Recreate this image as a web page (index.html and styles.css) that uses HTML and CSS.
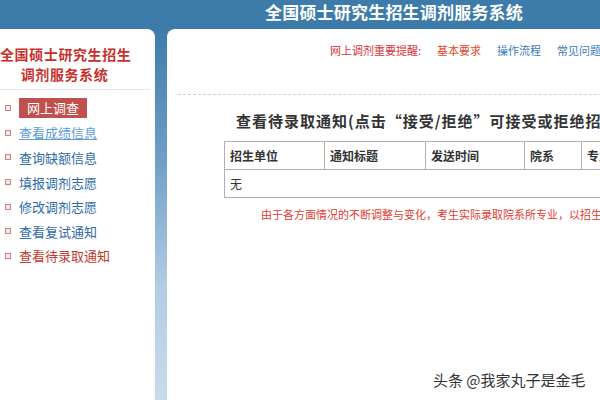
FILE: index.html
```html
<!DOCTYPE html>
<html>

<head>
    <title>全国硕士研究生招生调剂服务系统</title>
    <link rel="stylesheet" href="styles.css">
</head>

<body>
    <div class="top-bar">全国硕士研究生招生调剂服务系统</div>

    <div class="main">
        <!-- left menu -->
        <div class="side-panel">
            <div class="side-title">全国硕士研究生招生<br>调剂服务系统</div>
            <ul class="side-menu">
                <li><span class="dot"></span><span class="menu-btn">网上调查</span></li>
                <li><span class="dot"></span><a class="link-light">查看成绩信息</a></li>
                <li><span class="dot"></span><a>查询缺额信息</a></li>
                <li><span class="dot"></span><a>填报调剂志愿</a></li>
                <li><span class="dot"></span><a>修改调剂志愿</a></li>
                <li><span class="dot"></span><a>查看复试通知</a></li>
                <li><span class="dot"></span><a class="link-red">查看待录取通知</a></li>
            </ul>
        </div>

        <!-- content -->
        <div class="content-panel">
            <div class="notice-nav">
                <span class="nav-tip">网上调剂重要提醒:</span>
                <span class="nav-hot">基本要求</span>
                <span class="nav-link">操作流程</span>
                <span class="nav-link">常见问题</span>
            </div>
            <div class="dash-line"></div>

            <h2 class="page-heading">查看待录取通知(点击“接受/拒绝”可接受或拒绝招生单位的待录取通知)</h2>

            <table class="notice-table">
                <tr>
                    <th class="col-unit">招生单位</th>
                    <th class="col-title">通知标题</th>
                    <th class="col-time">发送时间</th>
                    <th class="col-dept">院系</th>
                    <th>专业</th>
                </tr>
                <tr>
                    <td colspan="5">无</td>
                </tr>
            </table>

            <p class="red-note">由于各方面情况的不断调整与变化，考生实际录取院系所专业，以招生单位最终确定为准。</p>
        </div>
    </div>

    <div class="watermark">头条 @我家丸子是金毛</div>
</body>

</html>
```

FILE: styles.css
```css
/* page base */
body {
    margin: 0;
    width: 600px;
    height: 400px;
    overflow: hidden;
    position: relative;
    background: #3d7caa;
    font-family: "Noto Sans CJK SC", "Noto Sans", sans-serif;
}

/* header bar */
.top-bar {
    height: 29px;
    line-height: 24px;
    padding-left: 265px;
    color: #fff;
    font-size: 17px;
    font-weight: bold;
    letter-spacing: 0.2px;
    white-space: nowrap;
}

.main {
    display: flex;
    height: 371px;
    background: linear-gradient(to bottom, #3d7caa 0%, #6f9fc6 35%, #b3cde4 70%, #c8dbec 100%);
}

/* left menu */
.side-panel {
    width: 155px;
    flex-shrink: 0;
    background: #fff;
    border-top-right-radius: 8px;
}

.side-title {
    width: 150px;
    box-sizing: border-box;
    margin-top: 15px;
    padding: 0 21px 5px 0;
    text-align: center;
    white-space: nowrap;
    color: #c9302c;
    font-size: 14px;
    font-weight: bold;
    letter-spacing: 0.6px;
    line-height: 20px;
    border-bottom: 1px solid #e6e6e6;
}

.side-menu {
    list-style: none;
    margin: 0;
    padding: 6px 0 0 5px;
}

.side-menu li {
    height: 24.6px;
    display: flex;
    align-items: center;
    font-size: 13px;
    color: #2f6aa9;
}

.dot {
    width: 4px;
    height: 4px;
    border: 1px solid #c48a8a;
    background: #f6e6e6;
    margin-right: 8px;
}

.menu-btn {
    background: #c0504d;
    color: #fff;
    padding: 0 8px;
    line-height: 20px;
}

.link-light {
    color: #5b9bd5;
    text-decoration: underline;
}

.link-red {
    color: #c0392b;
}

/* content area */
.content-panel {
    width: 520px;
    flex-shrink: 0;
    margin-left: 12px;
    background: #fff;
    border-top-left-radius: 8px;
    white-space: nowrap;
}

.notice-nav {
    padding: 13px 0 0 163px;
    font-size: 11px;
    line-height: 16px;
    display: flex;
    gap: 16px;
}

.nav-tip {
    color: #d4343a;
}

.nav-hot {
    color: #e04b2a;
}

.nav-link {
    color: #3a7bc0;
}

.dash-line {
    margin: 36px 0 0 11px;
    border-top: 1px dashed #d0d0d0;
}

.page-heading {
    margin: 16px 0 0 69px;
    font-size: 15px;
    line-height: 20px;
    letter-spacing: 1px;
    color: #333;
}

.notice-table {
    margin: 10px 0 0 57px;
    width: 520px;
    table-layout: fixed;
    border-collapse: collapse;
    font-size: 12px;
    color: #333;
}

.notice-table th,
.notice-table td {
    border: 1px solid #b0b0b0;
    height: 27px;
    padding: 0 5px;
    text-align: left;
}

.col-unit {
    width: 89px;
}

.col-title {
    width: 90px;
}

.col-time {
    width: 88px;
}

.col-dept {
    width: 46px;
}

.red-note {
    margin: 8px 0 0 94px;
    font-size: 11px;
    color: #e03c31;
}

/* watermark over the page */
.watermark {
    position: absolute;
    left: 433px;
    top: 369px;
    font-size: 15px;
    color: #333;
    text-shadow: 0 0 2px #fff;
    white-space: nowrap;
}
```
